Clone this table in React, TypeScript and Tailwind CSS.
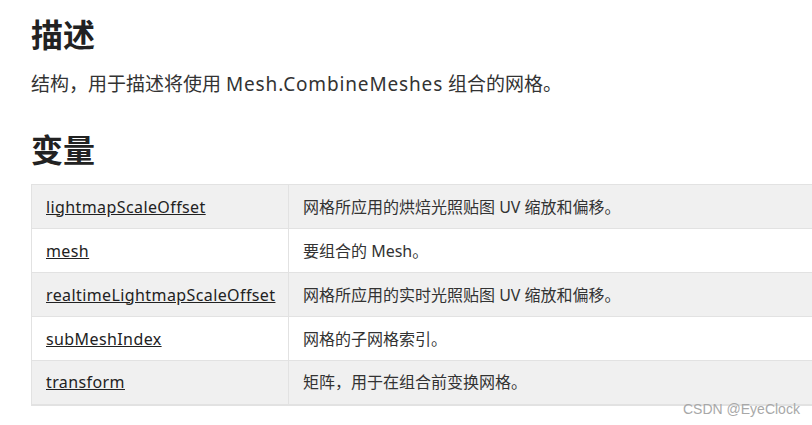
const rows = [
  { name: "lightmapScaleOffset", desc: "网格所应用的烘焙光照贴图 UV 缩放和偏移。" },
  { name: "mesh", desc: "要组合的 Mesh。" },
  { name: "realtimeLightmapScaleOffset", desc: "网格所应用的实时光照贴图 UV 缩放和偏移。" },
  { name: "subMeshIndex", desc: "网格的子网格索引。" },
  { name: "transform", desc: "矩阵，用于在组合前变换网格。" },
];

export default function App() {
  return (
    <div
      className="relative w-[812px] h-[425px] overflow-hidden bg-white text-[#333] pl-[31px] pt-[15px]"
      style={{ fontFamily: '"Noto Sans", "Noto Sans CJK SC", sans-serif' }}
    >
      <h2 className="text-[32px] leading-[40px] font-bold text-[#222]">描述</h2>
      <p className="mt-[15px] text-[19px] leading-[28px]">
        结构，用于描述将使用 <span className="tracking-[0.85px]">Mesh.CombineMeshes</span> 组合的网格。
      </p>
      <h2 className="mt-[32px] text-[32px] leading-[40px] font-bold text-[#222]">变量</h2>

      <table className="mt-[14px] w-[1000px] table-fixed border-collapse text-[16px] border-t border-b-2 border-l border-[#e2e2e2]">
        <colgroup>
          <col className="w-[257px]" />
          <col />
        </colgroup>
        <tbody>
          {rows.map((r, i) => (
            <tr
              key={r.name}
              className={`${i % 2 === 0 ? "bg-[#f0f0f0]" : "bg-white"} border-b border-[#e2e2e2]`}
            >
              <td className="h-[44px] pl-[14px] pr-0 border-r border-[#e2e2e2] align-middle whitespace-nowrap">
                <a href="#" className="underline text-[#222] tracking-[0.4px]">
                  {r.name}
                </a>
              </td>
              <td className="h-[44px] px-[14px] align-middle">{r.desc}</td>
            </tr>
          ))}
        </tbody>
      </table>

      <div
        className="absolute left-[683px] top-[399px] text-[14px] text-[#a8a8a8]"
        style={{ fontFamily: '"Liberation Sans", sans-serif' }}
      >
        CSDN @EyeClock
      </div>
    </div>
  );
}
